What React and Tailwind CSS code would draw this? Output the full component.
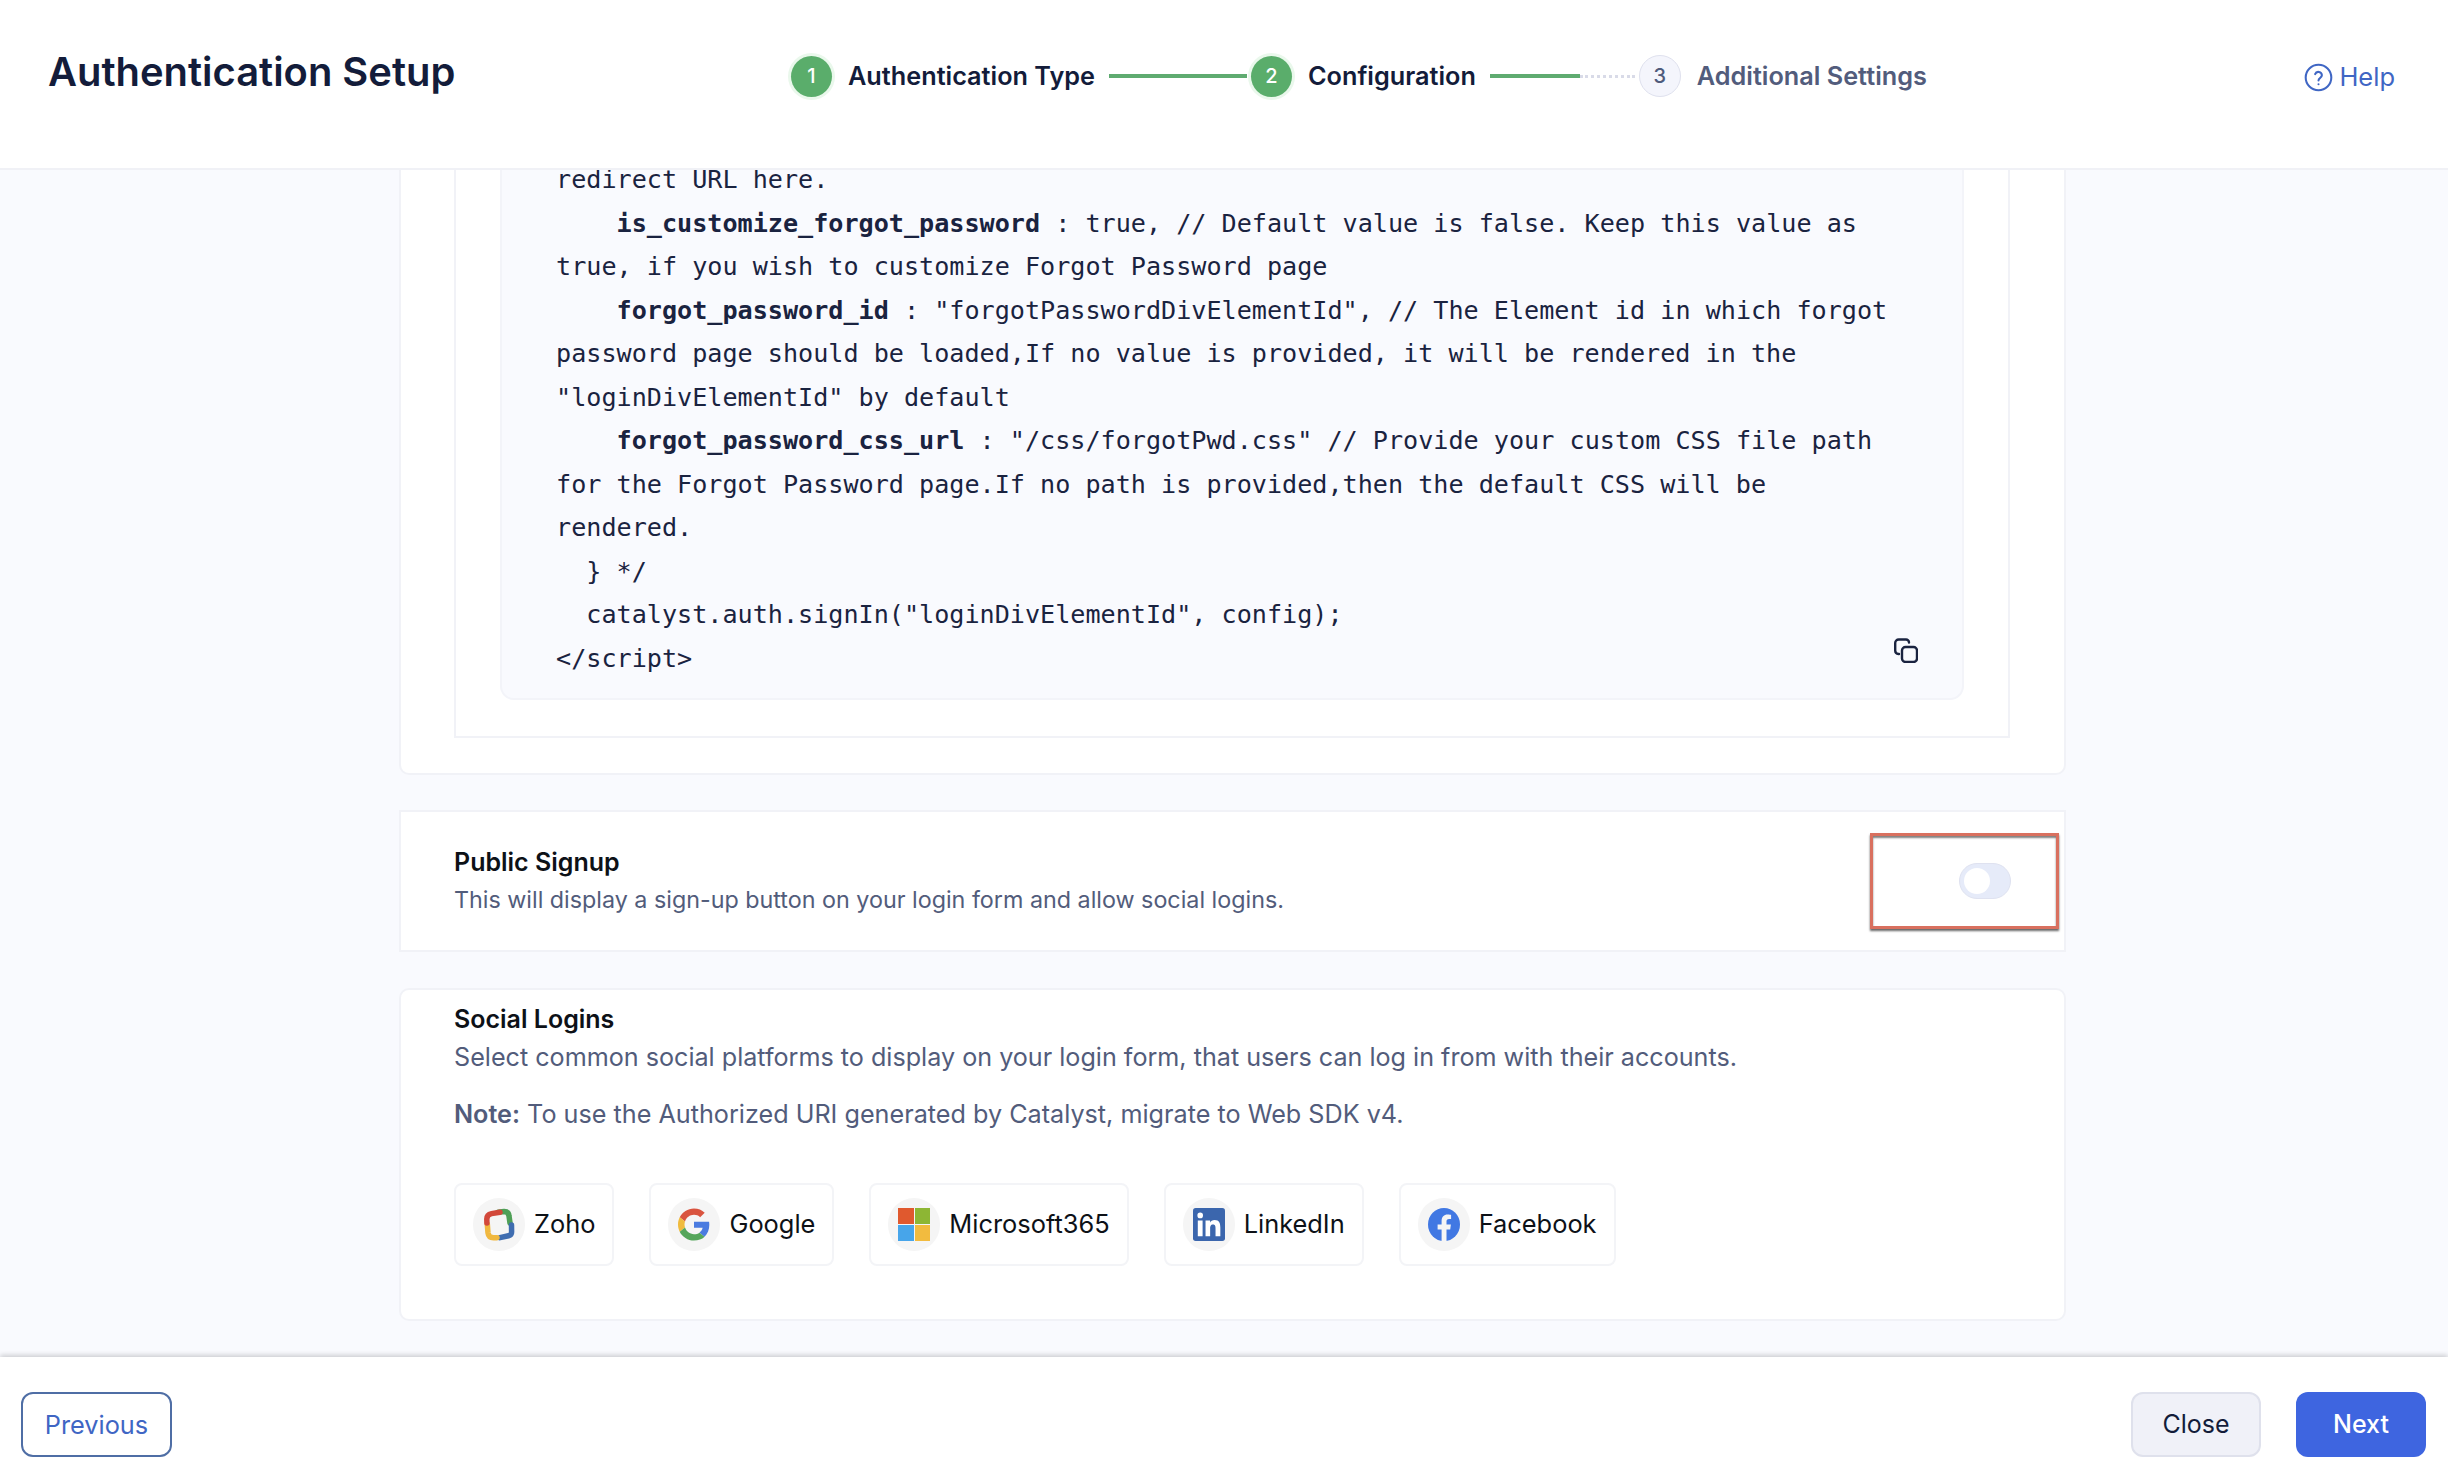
import { Fragment } from 'react'

const code = [
  [{ t: 'redirect URL here.' }],
  [{ t: '    ' }, { t: 'is_customize_forgot_password', b: true }, { t: ' : true, // Default value is false. Keep this value as' }],
  [{ t: 'true, if you wish to customize Forgot Password page' }],
  [{ t: '    ' }, { t: 'forgot_password_id', b: true }, { t: ' : "forgotPasswordDivElementId", // The Element id in which forgot' }],
  [{ t: 'password page should be loaded,If no value is provided, it will be rendered in the' }],
  [{ t: '"loginDivElementId" by default' }],
  [{ t: '    ' }, { t: 'forgot_password_css_url', b: true }, { t: ' : "/css/forgotPwd.css" // Provide your custom CSS file path' }],
  [{ t: 'for the Forgot Password page.If no path is provided,then the default CSS will be' }],
  [{ t: 'rendered.' }],
  [{ t: '  } */' }],
  [{ t: '  catalyst.auth.signIn("loginDivElementId", config);' }],
  [{ t: '</script>' }],
]

function ZohoIcon() {
  return (
    <svg width="32" height="33" viewBox="0 0 32 33" fill="none" strokeWidth="5.5" strokeLinecap="round">
      <path d="M27 15 L26 8 Q25.5 3.5 21 3.6 L15 4.2" stroke="#4f9f57" />
      <path d="M28.5 17 L28.6 24 Q28.6 27 25.5 27.8 L17 29.6" stroke="#3f6db0" />
      <path d="M4.3 16 L5 25 Q5.6 29.8 10.5 29.8 L14 29.7" stroke="#f0b83f" />
      <path d="M17 4.2 L8.5 5.6 Q3.8 6.5 3.8 11 L3.9 15" stroke="#d2483a" />
    </svg>
  )
}

function GoogleIcon() {
  return (
    <svg width="32" height="33" viewBox="0 0 48 48">
      <path fill="#d9543f" d="M24 9.5c3.54 0 6.71 1.22 9.21 3.6l6.85-6.85C35.9 2.38 30.47 0 24 0 14.62 0 6.51 5.38 2.56 13.22l7.98 6.19C12.43 13.72 17.74 9.5 24 9.5z" />
      <path fill="#4a7be0" d="M46.98 24.55c0-1.57-.15-3.09-.38-4.55H24v9.02h12.94c-.58 2.96-2.26 5.48-4.78 7.18l7.73 6c4.51-4.18 7.09-10.36 7.09-17.65z" />
      <path fill="#f0bb3e" d="M10.53 28.59c-.48-1.45-.76-2.99-.76-4.59s.27-3.14.76-4.59l-7.98-6.19C.92 16.46 0 20.12 0 24c0 3.88.92 7.54 2.56 10.78l7.97-6.19z" />
      <path fill="#55a65b" d="M24 48c6.48 0 11.93-2.13 15.89-5.81l-7.73-6c-2.15 1.45-4.92 2.3-8.16 2.3-6.26 0-11.57-4.22-13.47-9.91l-7.98 6.19C6.51 42.62 14.62 48 24 48z" />
    </svg>
  )
}

function MicrosoftIcon() {
  return (
    <div className="grid h-[33px] w-[32px] grid-cols-2 gap-[1.5px]">
      <span className="bg-[#e0592e]" />
      <span className="bg-[#8db634]" />
      <span className="bg-[#47a5ea]" />
      <span className="bg-[#f2bb3f]" />
    </div>
  )
}

function LinkedinIcon() {
  return (
    <svg width="32" height="33" viewBox="0 0 24 24" preserveAspectRatio="none">
      <rect width="24" height="24" rx="2" fill="#3b66ad" />
      <path fill="#fff" d="M3.6 9h3.6v11.6H3.6zM5.4 3.3a2.1 2.1 0 1 1 0 4.2 2.1 2.1 0 0 1 0-4.2zM9.4 9h3.4v1.6h.05c.48-.9 1.64-1.85 3.37-1.85 3.6 0 4.28 2.37 4.28 5.46v6.39h-3.6V15c0-1.35-.02-3.08-1.87-3.08-1.88 0-2.17 1.47-2.17 2.98v5.7H9.4z" />
    </svg>
  )
}

function FacebookIcon() {
  return (
    <svg width="32" height="33" viewBox="0 0 32 32" preserveAspectRatio="none">
      <circle cx="16" cy="16" r="16" fill="#4178e3" />
      <path fill="#f5f5f5" d="M13.6 32V20.8H9.6V16h4v-3.4c0-4 2.4-6.2 6-6.2 1.7 0 3.5.3 3.5.3v3.9h-2c-2 0-2.6 1.2-2.6 2.5V16h4.4l-.7 4.8h-3.7V32z" />
    </svg>
  )
}

const socials = [
  { name: 'Zoho', icon: <ZohoIcon /> },
  { name: 'Google', icon: <GoogleIcon /> },
  { name: 'Microsoft365', icon: <MicrosoftIcon /> },
  { name: 'LinkedIn', icon: <LinkedinIcon /> },
  { name: 'Facebook', icon: <FacebookIcon /> },
]

function Step({ n, label, done, active }) {
  return (
    <div className="flex items-center gap-[16px]">
      {done ? (
        <span className="flex h-[41px] w-[41px] items-center justify-center rounded-full bg-[#5aad6b] text-[20px] font-medium text-white ring-[3px] ring-[#eaf8ec]">
          {n}
        </span>
      ) : (
        <span className="flex h-[42px] w-[42px] items-center justify-center rounded-full border border-[#dfe1ee] bg-[#f4f5fc] text-[20px] font-medium text-[#4f5b7c]">
          {n}
        </span>
      )}
      <span className={`pt-[2px] text-[25.25px] font-semibold ${active ? 'text-[#131c3a]' : 'text-[#525c7c]'}`}>{label}</span>
    </div>
  )
}

export default function App() {
  return (
    <div className="flex h-screen flex-col overflow-hidden bg-[#f9fafe] font-['Inter',sans-serif]">
      {/* Header */}
      <header className="z-10 flex h-[170px] shrink-0 items-start border-b-2 border-[#f0f1f6] bg-white pl-[48px] pr-[53px]">
        <h1 className="mt-[46px] w-[743px] shrink-0 text-[39.9px] font-semibold leading-[52px] text-[#131c3a]">Authentication Setup</h1>
        <div className="mt-[55px] flex items-center">
          <Step n={1} label="Authentication Type" done active />
          <span className="ml-[14px] mr-[4px] h-[4px] w-[138px] bg-[#5fab70]" />
          <Step n={2} label="Configuration" done active />
          <span className="ml-[14px] h-[4px] w-[90px] bg-[#5fab70]" />
          <span className="mr-[4px] w-[55px] border-t-[3px] border-dotted border-[#d9dbe8]" />
          <Step n={3} label="Additional Settings" />
        </div>
        <a className="ml-auto mt-[61px] flex items-center gap-[6px] text-[25.5px] leading-[32px] text-[#3f66c4]">
          <svg width="29" height="29" viewBox="0 0 24 24" fill="none" stroke="currentColor" strokeWidth="1.7" strokeLinecap="round" strokeLinejoin="round">
            <circle cx="12" cy="12" r="10.6" />
            <path d="M9.2 9.2a2.9 2.9 0 0 1 5.6 1c0 1.9-2.8 2.6-2.8 4.2" />
            <path d="M12 17.6h.01" />
          </svg>
          Help
        </a>
      </header>

      {/* Scrolled content, pinned to the bottom so the code block runs under the header */}
      <main className="flex min-h-0 flex-1 flex-col justify-end gap-[36px] overflow-hidden pb-[36px] pl-[399px] pr-[382px]">
        <section className="shrink-0 rounded-b-[10px] border-x-2 border-b-2 border-[#f1f2f7] bg-white pb-[35px] pl-[53px] pr-[54px]">
          <div className="border-x-2 border-b-2 border-[#f1f2f7] pb-[36px] pl-[44px] pr-[44px]">
            <div className="relative rounded-b-[14px] border-2 border-t-0 border-[#f3f4f9] bg-[#f9fafe] pb-[18px] pl-[54px] pt-[40px] font-['DejaVu_Sans_Mono',monospace] text-[25.13px] leading-[43.5px] text-[#1a2340]">
              {code.map((line, i) => (
                <div key={i} className="whitespace-pre">
                  {line.map((s, j) => (
                    <Fragment key={j}>{s.b ? <b className="font-bold">{s.t}</b> : s.t}</Fragment>
                  ))}
                </div>
              ))}
              <svg className="absolute bottom-[35px] right-[44px]" width="24" height="25" viewBox="0 0 24 25" fill="none" stroke="#1a2340" strokeWidth="2.4" strokeLinecap="round">
                <rect x="8" y="9" width="15" height="15" rx="3.5" />
                <path d="M5 16H4.5A3.5 3.5 0 0 1 1.2 12.5V5A3.5 3.5 0 0 1 4.7 1.5H12a3 3 0 0 1 3 3" />
              </svg>
            </div>
          </div>
        </section>

        <section className="relative -mt-px flex h-[142px] shrink-0 flex-col justify-center border-2 border-[#f1f2f7] bg-white pl-[53px] pr-[54px]">
          <h2 className="text-[25px] font-semibold leading-[38px] text-[#0d1117]">Public Signup</h2>
          <p className="text-[23.3px] leading-[38px] text-[#525c7b]">This will display a sign-up button on your login form and allow social logins.</p>
          <div className="absolute right-[53px] top-[51px] flex h-[36px] w-[52px] items-center rounded-full border border-[#dfe2f0] bg-[#e6ebf9] pl-[4px]">
            <span className="h-[26px] w-[26px] rounded-full bg-white" />
          </div>
          {/* review annotation */}
          <div className="absolute left-[1469px] top-[21px] h-[96px] w-[189px] border-[3px] border-[#d9705f] shadow-[0_2px_2px_rgba(0,0,0,0.6),inset_0_2px_2px_rgba(0,0,0,0.5)]" />
        </section>

        <section className="h-[333px] shrink-0 rounded-[10px] border-2 border-[#f1f2f7] bg-white pl-[53px] pr-[54px] pt-[10px]">
          <h2 className="text-[25px] font-semibold leading-[38px] text-[#0d1117]">Social Logins</h2>
          <p className="text-[25.15px] leading-[38px] text-[#525c7b]">Select common social platforms to display on your login form, that users can log in from with their accounts.</p>
          <p className="mt-[19px] text-[25.2px] leading-[38px] text-[#525c7b]">
            <b className="font-semibold">Note:</b> To use the Authorized URI generated by Catalyst, migrate to Web SDK v4.
          </p>
          <div className="mt-[50px] flex gap-[35px]">
            {socials.map((s) => (
              <div key={s.name} className="flex h-[83px] items-center gap-[9px] rounded-[8px] border-2 border-[#f3f4f7] bg-white pl-[17px] pr-[17px]">
                <span className="flex h-[53px] w-[52px] items-center justify-center rounded-full bg-[#f5f5f5]">{s.icon}</span>
                <span className="text-[25.4px] text-[#0d1117]">{s.name}</span>
              </div>
            ))}
          </div>
        </section>
      </main>

      {/* Footer */}
      <footer className="z-10 flex h-[115px] shrink-0 items-start justify-between bg-white pl-[21px] pr-[22px] pt-[35px] shadow-[0_-2px_5px_rgba(0,0,0,0.18)]">
        <button className="h-[65px] w-[151px] rounded-[12px] border-2 border-[#4f6ea5] text-[25.3px] text-[#3f66c4]">Previous</button>
        <div className="flex gap-[35px]">
          <button className="h-[65px] w-[130px] rounded-[12px] border-2 border-[#dfe1ec] bg-[#f0f1f8] text-[25px] text-[#131c3a]">Close</button>
          <button className="h-[65px] w-[130px] rounded-[12px] bg-[#3e65e0] text-[25px] font-medium text-white">Next</button>
        </div>
      </footer>
    </div>
  )
}
